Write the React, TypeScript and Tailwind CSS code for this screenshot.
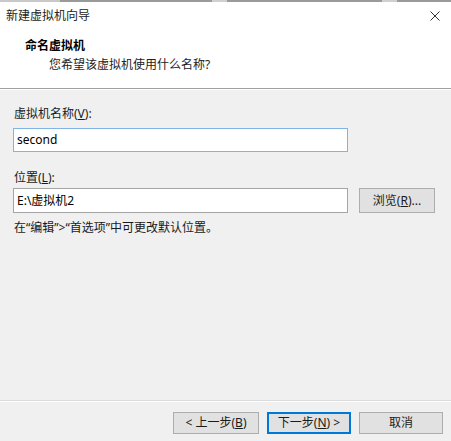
const font = { fontFamily: '"Noto Sans", "Noto Sans CJK SC", sans-serif' };

const Btn = ({ children, primary, className = "" }: { children: React.ReactNode; primary?: boolean; className?: string }) => (
  <div
    className={`flex items-center justify-center bg-[#e1e1e1] text-[12px] text-[#1a1a1a] ${
      primary ? "border-2 border-[#0078d7]" : "border border-[#adadad]"
    } ${className}`}
  >
    {children}
  </div>
);

export default function App() {
  return (
    <div className="w-[451px] h-[441px] flex flex-col bg-[#f0f0f0] overflow-hidden" style={font}>
      {/* top edge of the window behind */}
      <div className="flex h-[2px]">
        <div className="w-[60px] bg-[#c8c8c8]" />
        <div className="w-[152px] bg-[#9a9a9a]" />
        <div className="w-[15px] bg-[#d0d0d0]" />
        <div className="w-[155px] bg-[#9a9a9a]" />
        <div className="w-[15px] bg-[#d0d0d0]" />
        <div className="flex-1 bg-[#9a9a9a]" />
      </div>

      {/* title bar */}
      <div className="h-[28px] bg-white flex items-center justify-between pl-[6px] pr-[11px]">
        <span className="text-[12px] text-[#222]">新建虚拟机向导</span>
        <svg width="10" height="10" viewBox="0 0 10 10">
          <path d="M0.5 0.5 L9.5 9.5 M9.5 0.5 L0.5 9.5" stroke="#333" strokeWidth="1" />
        </svg>
      </div>

      {/* header */}
      <div className="h-[58px] bg-white flex flex-col pt-[6px]">
        <div className="pl-[25px] text-[12px] font-bold text-black leading-[20px]">命名虚拟机</div>
        <div className="pl-[49px] text-[12px] text-[#222] leading-[18px]">您希望该虚拟机使用什么名称?</div>
      </div>
      <div className="h-[1px] bg-[#a0a0a0]" />
      <div className="h-[1px] bg-[#ffffff]" />

      {/* body */}
      <div className="flex-1 flex flex-col px-[13px] pt-[15px]">
        <div className="text-[12px] text-[#1a1a1a] leading-[18px] pl-[1px]">
          虚拟机名称(<span className="underline">V</span>):
        </div>
        <div className="mt-[5px] w-[335px] h-[24px] bg-white border border-[#7fb4e4] flex items-center pl-[3px] text-[12px] text-black">
          second
        </div>

        <div className="mt-[17px] text-[12px] text-[#1a1a1a] leading-[18px] pl-[1px]">
          位置(<span className="underline">L</span>):
        </div>
        <div className="mt-[1px] flex items-center gap-[11px]">
          <div className="w-[335px] h-[25px] bg-white border border-[#a5a5a5] flex items-center pl-[3px] text-[12px] text-black">
            E:\虚拟机2
          </div>
          <Btn className="w-[76px] h-[25px]">
            浏览(<span className="underline">R</span>)...
          </Btn>
        </div>
        <div className="mt-[6px] text-[12px] text-[#1a1a1a] leading-[18px] pl-[1px]">
          在“编辑”&gt;“首选项”中可更改默认位置。
        </div>
      </div>

      {/* footer */}
      <div className="h-[1px] bg-[#dcdcdc]" />
      <div className="h-[1px] bg-white" />
      <div className="h-[39px] flex items-start pl-[173px] pt-[10px] gap-[8px]">
        <Btn className="w-[86px] h-[22px]">
          &lt; 上一步(<span className="underline">B</span>)
        </Btn>
        <Btn primary className="w-[84px] h-[22px]">
          下一步(<span className="underline">N</span>) &gt;
        </Btn>
        <Btn className="w-[84px] h-[22px]">取消</Btn>
      </div>
    </div>
  );
}
